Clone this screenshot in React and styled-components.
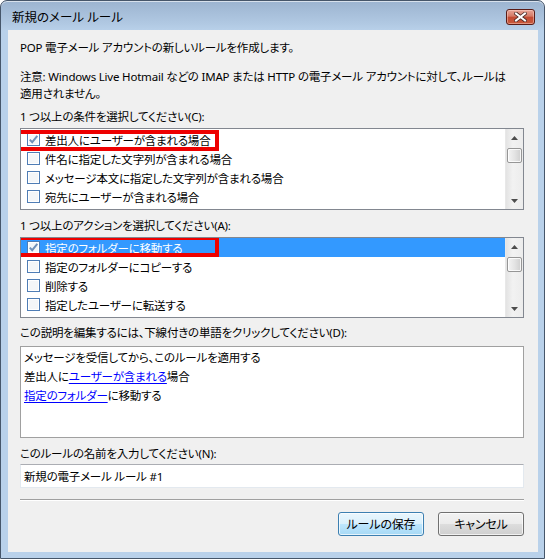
import React from "react";
import styled, { createGlobalStyle } from "styled-components";

const GlobalStyle = createGlobalStyle`
  html, body {
    margin: 0;
    padding: 0;
    background: #ffffff;
  }
  body {
    font-family: "Noto Sans", "Noto Sans CJK JP", sans-serif;
    font-size: 11.5px;
    letter-spacing: -0.2px;
    font-feature-settings: "palt";
    color: #000000;
  }
`;

const Window = styled.div`
  width: 545px;
  height: 559px;
  box-sizing: border-box;
  display: flex;
  flex-direction: column;
  border: 1px solid #46566a;
  border-radius: 7px 7px 0 0;
  background: linear-gradient(180deg, #9cb4d0 0px, #b0c8e2 22px, #b9d1ea 30px);
  padding: 0 6px 6px 7px;
  box-shadow: inset 0 1px 0 rgba(255, 255, 255, 0.6);
`;

const TitleBar = styled.div`
  height: 29px;
  flex: none;
  display: flex;
  align-items: center;
  justify-content: space-between;
`;

const TitleText = styled.div`
  font-size: 12.5px;
  letter-spacing: 0;
  padding-left: 4px;
  padding-top: 2px;
  color: #000;
`;

const CloseButton = styled.div`
  width: 29px;
  height: 16px;
  margin-right: 3px;
  margin-top: 2px;
  box-sizing: border-box;
  border: 1px solid #5a1c16;
  border-radius: 3px;
  background: linear-gradient(180deg, #e8a497 0%, #d47a66 45%, #c34a33 50%, #c85a3c 100%);
  box-shadow: inset 0 0 0 1px rgba(255, 220, 210, 0.45);
  display: flex;
  align-items: center;
  justify-content: center;
`;

const Body = styled.div`
  flex: 1;
  background: #f0f0f0;
  padding: 9px 14px 0 12px;
  display: flex;
  flex-direction: column;
`;

const Paragraph = styled.div`
  line-height: ${(p) => p.$lh || 17}px;
  margin-top: ${(p) => p.$mt || 0}px;
  white-space: nowrap;
`;

const Label = styled.div`
  line-height: 17px;
  margin-top: ${(p) => p.$mt || 0}px;
  margin-bottom: ${(p) => p.$mb || 3}px;
  white-space: nowrap;
`;

const ListBox = styled.div`
  height: ${(p) => p.$h}px;
  box-sizing: border-box;
  border: 1px solid #828790;
  background: #ffffff;
  display: flex;
  overflow: hidden;
`;

const Rows = styled.div`
  flex: 1;
  padding-top: ${(p) => p.$inset || 0}px;
  overflow: hidden;
`;

const Row = styled.div`
  position: relative;
  height: 19px;
  display: flex;
  align-items: center;
  gap: 5px;
  padding-left: 6px;
  white-space: nowrap;
  background: ${(p) => (p.$selected ? "#3399ff" : "transparent")};
  color: ${(p) => (p.$selected ? "#ffffff" : "#000000")};
`;

/* red marker drawn around a row */
const Highlight = styled.div`
  position: absolute;
  left: -5px;
  top: ${(p) => p.$top}px;
  width: 203px;
  height: ${(p) => p.$h}px;
  box-sizing: border-box;
  border: 4px solid #ee0000;
  pointer-events: none;
`;

const ScrollBar = styled.div`
  width: 17px;
  flex: none;
  background: linear-gradient(90deg, #e3e3e3, #f2f2f2 40%, #ececec);
  border-left: 1px solid #e8e8e8;
  display: flex;
  flex-direction: column;
  align-items: center;
`;

const ArrowButton = styled.div`
  width: 17px;
  height: 17px;
  display: flex;
  align-items: center;
  justify-content: center;
`;

const Thumb = styled.div`
  width: 15px;
  height: 15px;
  margin-top: 2px;
  box-sizing: border-box;
  border: 1px solid #969696;
  border-radius: 2px;
  background: linear-gradient(90deg, #f4f4f4, #e4e4e4 50%, #cfcfcf);
  box-shadow: inset 0 0 0 1px rgba(255, 255, 255, 0.8);
`;

const Track = styled.div`
  flex: 1;
`;

const DescBox = styled.div`
  height: 92px;
  box-sizing: border-box;
  border: 1px solid #a0a0a0;
  background: #ffffff;
  padding: 1px 0 0 3px;
`;

const DescLine = styled.div`
  line-height: 19px;
  white-space: nowrap;
`;

const Link = styled.span`
  color: #0000ff;
  text-decoration: underline;
  text-underline-offset: 2px;
`;

const TextInput = styled.div`
  height: 24px;
  box-sizing: border-box;
  border: 1px solid #e3e9ef;
  border-top-color: #abadb3;
  background: #ffffff;
  padding-left: 3px;
  display: flex;
  align-items: center;
`;

const Separator = styled.div`
  height: 1px;
  margin-top: 11px;
  background: #a0a0a0;
  border-bottom: 1px solid #ffffff;
`;

const ButtonRow = styled.div`
  display: flex;
  justify-content: flex-end;
  gap: 14px;
  margin-top: 11px;
`;

const Button = styled.div`
  width: 86px;
  height: 24px;
  box-sizing: border-box;
  border: 1px solid ${(p) => (p.$default ? "#3c7fb1" : "#707070")};
  border-radius: 3px;
  display: flex;
  align-items: center;
  justify-content: center;
  font-size: 12px;
  background: ${(p) =>
    p.$default
      ? "linear-gradient(180deg, #eaf6fd 0%, #d9f0fc 50%, #bee6fd 50%, #a7d9f5 100%)"
      : "linear-gradient(180deg, #f2f2f2 0%, #ebebeb 50%, #dddddd 50%, #cfcfcf 100%)"};
  box-shadow: inset 0 0 0 1px rgba(255, 255, 255, 0.7);
`;

const CheckBox = ({ checked }) => (
  <svg width="13" height="13" viewBox="0 0 13 13">
    <rect x="0.5" y="0.5" width="12" height="12" fill="#ffffff" stroke="#4f7db5" />
    <rect x="2" y="2" width="9" height="9" fill="#f4f6f8" stroke="none" />
    {checked && (
      <path
        d="M2.8 6.6 L5.2 9.2 L10.3 2.8"
        fill="none"
        stroke="#6f8fb8"
        strokeWidth="1.9"
      />
    )}
  </svg>
);

const CloseGlyph = () => (
  <svg width="13" height="10" viewBox="0 0 13 10">
    <path
      d="M2 1.5 L11 8.5 M11 1.5 L2 8.5"
      stroke="#4a2a26"
      strokeWidth="3.6"
      strokeLinecap="square"
    />
    <path
      d="M2 1.5 L11 8.5 M11 1.5 L2 8.5"
      stroke="#ffffff"
      strokeWidth="2"
      strokeLinecap="square"
    />
  </svg>
);

const Arrow = ({ down }) => (
  <svg width="7" height="4" viewBox="0 0 7 4">
    <path d={down ? "M0 0 L7 0 L3.5 4 Z" : "M0 4 L7 4 L3.5 0 Z"} fill="#4d4d4d" />
  </svg>
);

const ScrollList = ({ items, height, inset, mark }) => (
  <ListBox $h={height}>
    <Rows $inset={inset}>
      {items.map((item) => (
        <Row key={item.text} $selected={item.selected}>
          <CheckBox checked={item.checked} />
          {item.text}
          {item.marked && <Highlight $top={mark.top} $h={mark.h} />}
        </Row>
      ))}
    </Rows>
    <ScrollBar>
      <ArrowButton>
        <Arrow />
      </ArrowButton>
      <Thumb />
      <Track />
      <ArrowButton>
        <Arrow down />
      </ArrowButton>
    </ScrollBar>
  </ListBox>
);

const conditions = [
  { text: "差出人にユーザーが含まれる場合", checked: true, marked: true },
  { text: "件名に指定した文字列が含まれる場合" },
  { text: "メッセージ本文に指定した文字列が含まれる場合" },
  { text: "宛先にユーザーが含まれる場合" },
];

const actions = [
  { text: "指定のフォルダーに移動する", checked: true, marked: true, selected: true },
  { text: "指定のフォルダーにコピーする" },
  { text: "削除する" },
  { text: "指定したユーザーに転送する" },
];

export default function App() {
  return (
    <>
      <GlobalStyle />
      <Window>
        <TitleBar>
          <TitleText>新規のメール ルール</TitleText>
          <CloseButton>
            <CloseGlyph />
          </CloseButton>
        </TitleBar>
        <Body>
          <Paragraph $lh={18}>POP 電子メール アカウントの新しいルールを作成します。</Paragraph>
          <Paragraph $mt={11}>
            注意: Windows Live Hotmail などの IMAP または HTTP の電子メール アカウントに対して、ルールは
            <br />
            適用されません。
          </Paragraph>
          <Label $mt={6}>1 つ以上の条件を選択してください(C):</Label>
          <ScrollList items={conditions} height={82} inset={1} mark={{ top: 0, h: 21 }} />
          <Label $mt={7}>1 つ以上のアクションを選択してください(A):</Label>
          <ScrollList items={actions} height={81} inset={0} mark={{ top: -2, h: 21 }} />
          <Label $mt={6} $mb={5}>この説明を編集するには、下線付きの単語をクリックしてください(D):</Label>
          <DescBox>
            <DescLine>メッセージを受信してから、このルールを適用する</DescLine>
            <DescLine>
              差出人に<Link>ユーザーが含まれる</Link>場合
            </DescLine>
            <DescLine>
              <Link>指定のフォルダー</Link>に移動する
            </DescLine>
          </DescBox>
          <Label $mt={7} $mb={2}>このルールの名前を入力してください(N):</Label>
          <TextInput>新規の電子メール ルール #1</TextInput>
          <Separator />
          <ButtonRow>
            <Button $default>ルールの保存</Button>
            <Button>キャンセル</Button>
          </ButtonRow>
        </Body>
      </Window>
    </>
  );
}
